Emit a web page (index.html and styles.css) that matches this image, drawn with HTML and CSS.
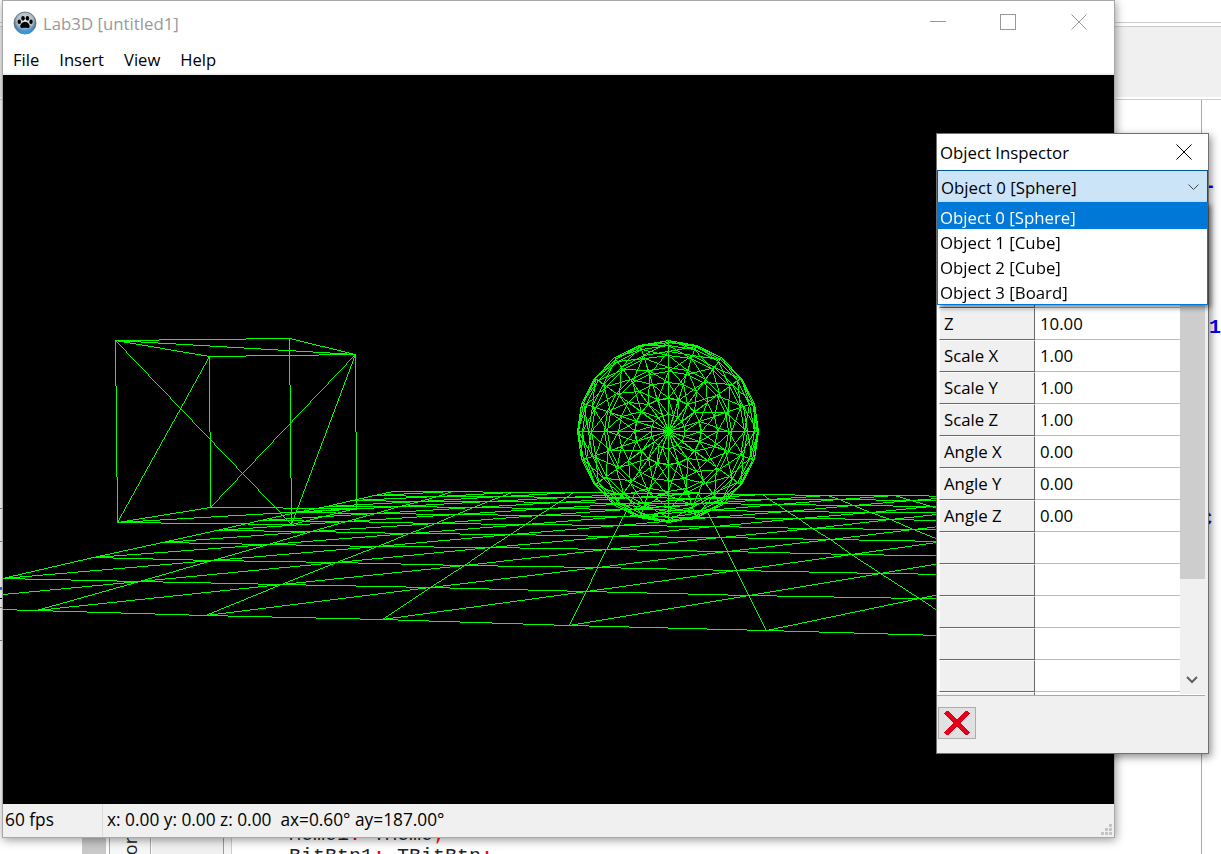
FILE: index.html
```html
<!DOCTYPE html>
<html lang="en">
<head>
<meta charset="utf-8">
<title>Lab3D [untitled1]</title>
<link rel="stylesheet" href="styles.css">
</head>
<body>
<div class="desktop">

  <div class="ide">
    <div class="ide-top"></div>
    <div class="ide-toolbar"></div>
    <div class="ide-body">
      <div class="ide-left"></div>
      <div class="ide-thumb"></div>
      <div class="ide-tabs"><span class="ide-tab-label">or</span></div>
      <div class="ide-palette"></div>
      <div class="ide-gutter"></div>
      <div class="ide-code">
        <div class="code-line">Memo1<span class="sym">:</span> TMemo<span class="sym">;</span></div>
        <div class="code-line">BitBtn1<span class="sym">:</span> TBitBtn<span class="sym">;</span></div>
      </div>
      <div class="ide-end"></div>
    </div>
    <span class="frag frag-a">-</span>
    <span class="frag frag-b">11</span>
    <span class="frag frag-c">C</span>
    <i class="tick tick-1"></i><i class="tick tick-2"></i><i class="tick tick-3"></i><i class="tick tick-4"></i><i class="tick tick-5"></i><i class="tick tick-6"></i>
  </div>

  <div class="window main-window">
    <div class="titlebar">
      <svg class="app-icon" width="24" height="24" viewBox="0 0 24 24">
        <defs>
          <radialGradient id="orb" cx="50%" cy="40%" r="60%">
            <stop offset="0" stop-color="#e8eef2"/>
            <stop offset="0.62" stop-color="#aeb9c2"/>
            <stop offset="0.85" stop-color="#4d6f8c"/>
            <stop offset="1" stop-color="#2f6d9f"/>
          </radialGradient>
          <linearGradient id="rim" x1="0" y1="0" x2="0" y2="1">
            <stop offset="0.55" stop-color="#4aa3e0" stop-opacity="0"/>
            <stop offset="1" stop-color="#2f9fec"/>
          </linearGradient>
        </defs>
        <circle cx="12" cy="12" r="11" fill="url(#orb)" stroke="#5a6b78" stroke-width="0.8"/>
        <circle cx="12" cy="12" r="11" fill="url(#rim)"/>
        <ellipse cx="6.3" cy="10.8" rx="1.7" ry="2.2" fill="#000"/>
        <ellipse cx="10" cy="7.3" rx="1.8" ry="2.4" fill="#000"/>
        <ellipse cx="14.4" cy="7.3" rx="1.8" ry="2.4" fill="#000"/>
        <ellipse cx="18" cy="10.8" rx="1.7" ry="2.2" fill="#000"/>
        <path d="M12 10.8c2.6 0 5.2 3.2 4.6 5.2-.5 1.6-2.8.8-4.6.8s-4.1.8-4.6-.8C6.800 14 9.400 10.800 12 10.800z" fill="#000"/>
      </svg>
      <span class="title-text">Lab3D [untitled1]</span>
      <div class="controls">
        <div class="control">
          <svg width="16" height="16" viewBox="0 0 16 16"><path d="M0 7.500H16" stroke="#999" fill="none"/></svg>
        </div>
        <div class="control">
          <svg width="16" height="16" viewBox="0 0 16 16"><rect x="0.500" y="0.500" width="15" height="15" stroke="#999" fill="none"/></svg>
        </div>
        <div class="control">
          <svg width="16" height="16" viewBox="0 0 16 16"><path d="M0.500 0.500L15.500 15.500M15.500 0.500L0.500 15.500" stroke="#999" fill="none"/></svg>
        </div>
      </div>
    </div>
    <nav class="menubar">
      <span class="menu-item">File</span>
      <span class="menu-item">Insert</span>
      <span class="menu-item">View</span>
      <span class="menu-item">Help</span>
    </nav>
    <div class="viewport">
      <canvas id="scene" class="scene" width="1111" height="729"></canvas>
    </div>
    <div class="statusbar">
      <div class="status-fps">60 fps</div>
      <div class="status-pos">x: 0.00 y: 0.00 z: 0.00  ax=0.60° ay=187.00°</div>
      <svg class="grip" width="12" height="12" viewBox="0 0 12 12" fill="#c4c4c4">
        <rect x="8" y="0" width="3" height="3"/>
        <rect x="4" y="4" width="3" height="3"/><rect x="8" y="4" width="3" height="3"/>
        <rect x="0" y="8" width="3" height="3"/><rect x="4" y="8" width="3" height="3"/><rect x="8" y="8" width="3" height="3"/>
      </svg>
    </div>
  </div>

  <div class="window inspector">
    <div class="insp-title">
      <span>Object Inspector</span>
      <svg class="insp-close" width="16" height="16" viewBox="0 0 16 16"><path d="M0.500 0.500L15.500 15.500M15.500 0.500L0.500 15.500" stroke="#000" fill="none"/></svg>
    </div>
    <div class="combo">
      <span>Object 0 [Sphere]</span>
      <svg class="combo-arrow" width="11" height="7" viewBox="0 0 11 7"><path d="M0.500 0.500L5.500 5.500L10.500 0.500" stroke="#444" fill="none"/></svg>
    </div>
    <ul class="dropdown">
      <li class="drop-item selected">Object 0 [Sphere]</li>
      <li class="drop-item">Object 1 [Cube]</li>
      <li class="drop-item">Object 2 [Cube]</li>
      <li class="drop-item">Object 3 [Board]</li>
    </ul>
    <div class="grid-panel">
      <div class="grid">
        <div class="row"><div class="cell-key"></div><div class="cell-val"></div></div>
        <div class="row"><div class="cell-key"></div><div class="cell-val"></div></div>
        <div class="row"><div class="cell-key"></div><div class="cell-val"></div></div>
        <div class="row"><div class="cell-key">Z</div><div class="cell-val">10.00</div></div>
        <div class="row"><div class="cell-key">Scale X</div><div class="cell-val">1.00</div></div>
        <div class="row"><div class="cell-key">Scale Y</div><div class="cell-val">1.00</div></div>
        <div class="row"><div class="cell-key">Scale Z</div><div class="cell-val">1.00</div></div>
        <div class="row"><div class="cell-key">Angle X</div><div class="cell-val">0.00</div></div>
        <div class="row"><div class="cell-key">Angle Y</div><div class="cell-val">0.00</div></div>
        <div class="row"><div class="cell-key">Angle Z</div><div class="cell-val">0.00</div></div>
        <div class="row"><div class="cell-key"></div><div class="cell-val"></div></div>
        <div class="row"><div class="cell-key"></div><div class="cell-val"></div></div>
        <div class="row"><div class="cell-key"></div><div class="cell-val"></div></div>
        <div class="row"><div class="cell-key"></div><div class="cell-val"></div></div>
        <div class="row"><div class="cell-key"></div><div class="cell-val"></div></div>
        <div class="row"><div class="cell-key"></div><div class="cell-val"></div></div>
      </div>
      <div class="scrollbar">
        <div class="thumb"></div>
        <svg class="scroll-down" width="12" height="8" viewBox="0 0 12 8"><path d="M1 1L6 6L11 1" stroke="#606060" stroke-width="2" fill="none"/></svg>
      </div>
    </div>
    <div class="insp-foot">
      <button class="del-btn" type="button" aria-label="Delete">
        <svg width="26" height="24" viewBox="0 0 26 24"><path d="M3.500 2.500L22.500 21.500M22.500 2.500L3.500 21.500" stroke="#e2001a" stroke-width="5" stroke-linecap="square" fill="none" shape-rendering="crispEdges"/></svg>
      </button>
    </div>
  </div>

</div>
<script src="scene.js"></script>
</body>
</html>
```
FILE: styles.css
```css
* { box-sizing: border-box; }
html, body { margin: 0; padding: 0; }
body {
  width: 1221px;
  height: 854px;
  overflow: hidden;
  background: #fff;
  font-family: "Open Sans", "Liberation Sans", sans-serif;
  font-size: 16.8px;
  line-height: 22px;
  color: #000;
}
.desktop { position: relative; width: 1221px; height: 854px; overflow: hidden; }

/* IDE behind the app */
.ide { position: absolute; inset: 0; display: flex; flex-direction: column; background: #fff; }
.ide-top { height: 22px; flex: none; }
.ide-toolbar {
  flex: none;
  height: 78px;
  background: #f0f0f0;
  border-top: 1px solid #ccc;
  border-bottom: 1px solid #ccc;
  box-shadow: inset 0 3px 0 #fff, inset 0 4px 0 #ccc, inset 0 -2px 0 #fff;
}
.ide-body { flex: 1; display: flex; min-height: 0; }
.ide-left { width: 82px; flex: none; }
.ide-thumb { width: 24px; flex: none; background: #c8c8c8; }
.ide-tabs {
  width: 42px;
  flex: none;
  margin-left: 3px;
  border-left: 1px solid #aaa;
  border-right: 1px solid #aaa;
  position: relative;
  background: #f7f7f7;
}
.ide-tab-label {
  position: absolute;
  left: 9px;
  bottom: -1px;
  writing-mode: vertical-rl;
  transform: rotate(180deg);
  font-size: 18px;
  color: #222;
}
.ide-palette { width: 72px; flex: none; margin-left: 1px; background: #f0f0f0; border-right: 1px solid #999; }
.ide-gutter { width: 8px; flex: none; border-right: 1px solid #ccc; background: #f4f4f4; }
.ide-code {
  width: 969px;
  flex: none;
  padding: 724px 0 0 57px;
  font-family: "Liberation Mono", monospace;
  font-size: 20px;
  line-height: 22px;
  color: #223;
}
.code-line { white-space: pre; }
.sym { color: #f00; }
.ide-end { flex: 1; border-left: 1px solid #aaa; }
.frag {
  position: absolute;
  font-family: "Liberation Mono", monospace;
  font-weight: bold;
  font-size: 20px;
  line-height: 22px;
  color: #00f;
}
.frag-a { left: 1204px; top: 176px; }
.frag-b { left: 1197px; top: 317px; }
.frag-c { left: 1200px; top: 509px; }
.tick { position: absolute; left: 0; width: 2px; height: 1px; background: #888; }
.tick-1 { top: 508px; }
.tick-2 { top: 541px; }
.tick-3 { top: 587px; height: 3px; background: #3a7fb5; }
.tick-4 { top: 598px; background: #000; }
.tick-5 { top: 607px; }
.tick-6 { top: 640px; }

/* Windows */
.window { position: absolute; display: flex; flex-direction: column; }
.main-window {
  left: 2px;
  top: 0;
  width: 1113px;
  height: 838px;
  background: #fff;
  border: 1px solid #a8a8a8;
  box-shadow: 1px 2px 9px rgba(0, 0, 0, 0.4);
}
.titlebar { height: 45px; flex: none; display: flex; align-items: center; padding-left: 10px; }
.app-icon { flex: none; margin-right: 6px; margin-top: -2px; }
.title-text { color: #999; }
.controls { margin-left: auto; display: flex; align-self: stretch; }
.control { width: 70.500px; display: flex; align-items: center; justify-content: center; padding-bottom: 3px; }
.menubar { height: 29px; flex: none; display: flex; align-items: flex-start; padding: 3px 0 0 10px; gap: 20px; border-bottom: 2px solid #f0f0f0; font-size: 16.600px; }
.viewport { flex: 1; min-height: 0; background: #000; }
.scene { display: block; }
.statusbar {
  height: 33px;
  flex: none;
  display: flex;
  align-items: center;
  background: #f0f0f0;
  position: relative;
  font-size: 17.300px;
}
.status-fps { width: 100px; height: 100%; padding: 5px 0 0 2px; border-right: 1px solid #dcdcdc; flex: none; }
.status-pos { padding: 0 0 1px 4px; white-space: pre; }
.grip { position: absolute; right: 1px; bottom: 1px; }

/* Inspector */
.inspector {
  left: 936px;
  top: 133px;
  width: 273px;
  height: 621px;
  background: #f0f0f0;
  border: 1px solid #707070;
  box-shadow: 2px 3px 8px rgba(0, 0, 0, 0.45);
}
.insp-title {
  height: 36px;
  flex: none;
  display: flex;
  align-items: center;
  justify-content: space-between;
  padding: 2px 16px 0 3px;
  background: #fff;
}
.insp-close { flex: none; margin-top: -2px; }
.combo {
  height: 33px;
  flex: none;
  display: flex;
  align-items: center;
  justify-content: space-between;
  padding: 2px 8px 0 3px;
  background: #cce4f7;
  border: 1px solid #005499;
}
.dropdown {
  position: absolute;
  left: 0;
  top: 68px;
  width: 271px;
  height: 103px;
  margin: 0;
  padding: 0;
  list-style: none;
  background: #fff;
  border: 1px solid #0078d7;
  box-shadow: 3px 3px 5px rgba(0, 0, 0, 0.45);
  z-index: 2;
}
.drop-item { height: 25px; padding-left: 2px; line-height: 27px; }
.drop-item.selected { height: 26px; background: #0078d7; color: #fff; line-height: 30px; }
.grid-panel {
  height: 493px;
  flex: none;
  display: flex;
  padding: 9px 0 0 2px;
  margin-right: 3px;
  background: #fff;
  border-bottom: 1px solid #aaa;
  position: relative;
  overflow: hidden;
}
.grid { width: 241px; flex: none; }
.row { display: flex; height: 32px; }
.cell-key {
  width: 96px;
  flex: none;
  padding: 4px 0 0 4px;
  background: #f0f0f0;
  border-top: 1px solid #fff;
  border-left: 1px solid #fff;
  border-right: 1px solid #696969;
  border-bottom: 1px solid #696969;
}
.cell-val {
  flex: 1;
  padding: 5px 0 0 5px;
  background: #fff;
  border-bottom: 1px solid #bbb;
}
.scrollbar {
  position: absolute;
  left: 243px;
  top: 0;
  bottom: 1px;
  width: 25px;
  background: #f0f0f0;
}
.thumb { height: 376px; background: #cdcdcd; }
.scroll-down { position: absolute; left: 6px; bottom: 10px; }
.insp-foot { flex: 1; display: flex; align-items: flex-start; padding: 11px 0 0 1px; }
.del-btn {
  width: 38px;
  height: 32px;
  padding: 0;
  display: flex;
  align-items: center;
  justify-content: center;
  background: #e1e1e1;
  border: 1px solid #adadad;
}
```
FILE: scene.js
```js
(function () {
  var OX = 3, OY = 75;
  var ctx = document.getElementById('scene').getContext('2d');
  ctx.fillStyle = '#00ff00';

  // Aliased 1px line, like the fixed-function GL wireframe of the original
  function seg(a, b) {
    var x0 = Math.round(a[0] - OX), y0 = Math.round(a[1] - OY);
    var x1 = Math.round(b[0] - OX), y1 = Math.round(b[1] - OY);
    var dx = Math.abs(x1 - x0), dy = Math.abs(y1 - y0);
    var sx = x0 < x1 ? 1 : -1, sy = y0 < y1 ? 1 : -1;
    var err = dx - dy;
    var guard = 0;
    while (guard++ < 5000) {
      ctx.fillRect(x0, y0, 1, 1);
      if (x0 === x1 && y0 === y1) break;
      var e2 = 2 * err;
      if (e2 > -dy) { err -= dy; x0 += sx; }
      if (e2 < dx) { err += dx; y0 += sy; }
    }
  }

  // Board: 10x10 perspective grid, each cell split by a diagonal
  function floorPt(i, j) {
    var s = -4.5 + i;
    var c = 1 / (36.33 + 7.72 * j);
    var h = c * 7166 / (1 - c * s);
    return [666 + s * h, 430 + h];
  }
  for (var i = 0; i <= 10; i++) {
    for (var j = 0; j <= 10; j++) {
      var p = floorPt(i, j);
      if (i < 10) seg(p, floorPt(i + 1, j));
      if (j < 10) seg(p, floorPt(i, j + 1));
      if (i < 10 && j < 10) seg(p, floorPt(i + 1, j + 1));
    }
  }

  // Cube
  var A = [115, 340], B = [289, 338], C = [355, 354], D = [209, 356];
  var E = [117, 522], F = [291, 524], G = [356, 508], H = [210, 507];
  [[A, B], [B, C], [C, D], [D, A], [A, C],
   [E, F], [F, G], [G, H], [H, E], [E, G],
   [A, E], [B, F], [C, G], [D, H],
   [A, F], [D, E], [C, H], [C, F]].forEach(function (e) { seg(e[0], e[1]); });

  // Sphere, seen along its axis
  var M = 20, N = 12, CAM = 3, FOCAL = 258, CX = 667.5, CY = 431;
  function spherePt(lat, lon) {
    var t = Math.PI * lat / N, f = 2 * Math.PI * lon / M;
    var k = FOCAL / (CAM - Math.cos(t));
    return [CX + k * Math.sin(t) * Math.cos(f), CY + k * Math.sin(t) * Math.sin(f)];
  }
  for (var la = 0; la < N; la++) {
    for (var lo = 0; lo < M; lo++) {
      var q = spherePt(la, lo);
      seg(q, spherePt(la + 1, lo));
      if (la > 0) seg(q, spherePt(la, lo + 1));
      seg(q, spherePt(la + 1, lo + 1));
    }
  }
})();
```
